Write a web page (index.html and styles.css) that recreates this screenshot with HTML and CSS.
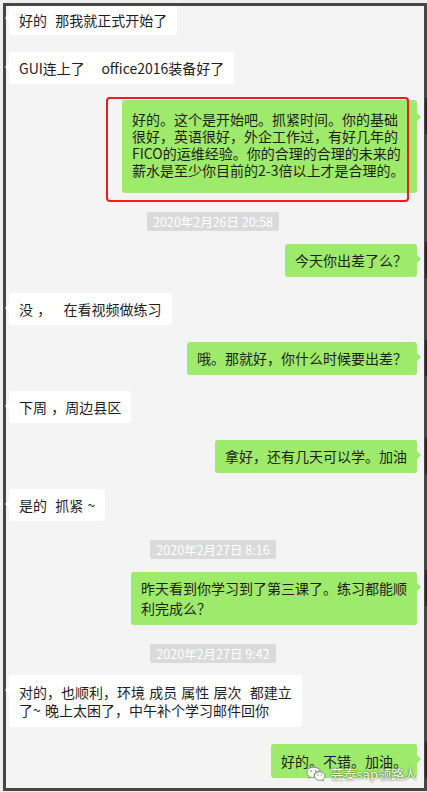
FILE: index.html
```html
<!DOCTYPE html>
<html lang="zh-CN">
<head>
<meta charset="utf-8">
<title>聊天记录</title>
<link rel="stylesheet" href="styles.css">
</head>
<body>
<div class="frame">
  <div class="chat">
    <div class="bubble left cut">好的&nbsp;&nbsp;那我就正式开始了</div>
    <div class="bubble left">GUI连上了&nbsp;&nbsp;&nbsp;&nbsp;office2016装备好了</div>
    <div class="bubble right wide">好的。这个是开始吧。抓紧时间。你的基础<br>很好，英语很好，外企工作过，有好几年的<br>FICO的运维经验。你的合理的合理的未来的<br>薪水是至少你目前的2-3倍以上才是合理的。<span class="mark"></span><span class="avatar"></span></div>
    <div class="stamp">2020年2月26日 20:58</div>
    <div class="bubble right">今天你出差了么？<span class="avatar"></span></div>
    <div class="bubble left">没 ，&nbsp;&nbsp;&nbsp;在看视频做练习</div>
    <div class="bubble right">哦。那就好，你什么时候要出差？<span class="avatar"></span></div>
    <div class="bubble left">下周 ，周边县区</div>
    <div class="bubble right">拿好，还有几天可以学。加油<span class="avatar"></span></div>
    <div class="bubble left">是的&nbsp;&nbsp;抓紧 ~</div>
    <div class="stamp">2020年2月27日 8:16</div>
    <div class="bubble right two">昨天看到你学习到了第三课了。练习都能顺<br>利完成么？<span class="avatar"></span></div>
    <div class="stamp">2020年2月27日 9:42</div>
    <div class="bubble left two-left">对的，也顺利，环境 成员 属性 层次&nbsp;&nbsp;都建立<br>了~ 晚上太困了，中午补个学习邮件回你</div>
    <div class="bubble right last">好的。不错。加油。<span class="avatar"></span></div>
  </div>
  <div class="watermark">
    <svg class="wx" width="20" height="16" viewBox="0 0 20 16" aria-hidden="true">
      <g fill="rgba(255,255,255,0.9)" stroke="#8a8a8a" stroke-width="1">
        <path d="M7.5 1.2C3.9 1.2 1 3.5 1 6.4c0 1.6.9 3 2.3 4l-.6 1.9 2.2-1.1c.8.2 1.7.4 2.6.4.3 0 .6 0 .9 0-.2-.5-.3-1-.3-1.6 0-2.8 2.6-5 5.9-5h.4C13.8 2.8 10.9 1.2 7.5 1.2z"/>
        <path d="M19 10c0-2.4-2.4-4.3-5.3-4.3S8.4 7.6 8.4 10s2.4 4.3 5.3 4.3c.7 0 1.3-.1 1.9-.3l1.8.9-.5-1.6C18.2 12.5 19 11.3 19 10z"/>
      </g>
      <g fill="#8a8a8a">
        <circle cx="5.2" cy="4.9" r=".8"/><circle cx="9.6" cy="4.9" r=".8"/>
        <circle cx="12" cy="9" r=".65"/><circle cx="15.5" cy="9" r=".65"/>
      </g>
    </svg>
    <span class="wm-text">芸泰sap领路人</span>
  </div>
</div>
</body>
</html>
```
FILE: styles.css
```css
* { box-sizing: border-box; }

html, body {
  margin: 0;
  padding: 0;
  background: #efefef;
}

body {
  font-family: "Noto Sans CJK SC", "Microsoft YaHei", sans-serif;
  font-size: 14px;
  color: #1e1e1e;
}

.frame {
  position: relative;
  margin: 3px 0 0 3px;
  width: 424px;
  height: 788px;
  border: 3px solid #464646;
  background: #f4f4f4;
}

.chat {
  display: flex;
  flex-direction: column;
  gap: 16.5px;
  padding: 0 7px 0 3px;
}

.bubble {
  position: relative;
  padding: 7px 10px;
  line-height: 18px;
  border-radius: 3px;
  white-space: nowrap;
  word-spacing: 1px;
}

.bubble::before {
  content: "";
  position: absolute;
  top: 11px;
  border-top: 4px solid transparent;
  border-bottom: 4px solid transparent;
}

.left {
  align-self: flex-start;
  background: #ffffff;
}

.left::before {
  left: -4px;
  border-right: 4px solid #ffffff;
}

.right {
  align-self: flex-end;
  background: #9eea6a;
  padding-bottom: 8px;
}

.right::before {
  right: -4px;
  border-left: 4px solid #9eea6a;
}

.cut {
  padding: 5px 10px 6px;
  border-top-left-radius: 0;
  border-top-right-radius: 0;
}

.cut::before { top: 8px; }

.wide {
  width: 295px;
  line-height: 17px;
  padding: 11px 10px 14px;
}

.wide::before { top: 13px; }

.two {
  line-height: 20.5px;
  padding: 6px 10px 6px;
}

.two-left {
  padding: 8px 10px;
}

.last {
  padding: 8px 10px 8px;
}

.stamp {
  align-self: center;
  margin-top: 2.5px;
  margin-bottom: -4px;
  padding: 0 6px;
  height: 19px;
  line-height: 19px;
  font-size: 12.5px;
  color: #ffffff;
  background: #dadada;
  border-radius: 2px;
}

.mark {
  position: absolute;
  left: -16px;
  top: -3px;
  width: 303px;
  height: 105px;
  border: 2px solid #f21b1b;
  border-radius: 4px;
}

.avatar {
  position: absolute;
  right: -10px;
  top: -2px;
  width: 2px;
  height: 36px;
  background: #2b2723;
}

.watermark {
  position: absolute;
  right: 7px;
  top: 760px;
  display: flex;
  align-items: center;
  gap: 5px;
}

.wx { display: block; }

.wm-text {
  font-size: 13px;
  line-height: 16px;
  color: #ffffff;
  text-shadow: 0 0 2px rgba(0, 0, 0, 0.55), 0 0 1px rgba(0, 0, 0, 0.5);
}
```
